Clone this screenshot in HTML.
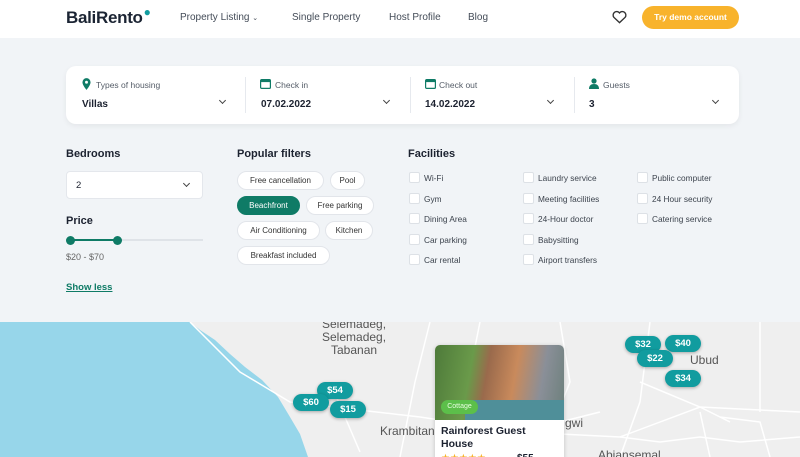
<!DOCTYPE html>
<html><head><meta charset="utf-8"><style>
*{box-sizing:border-box;margin:0;padding:0}
body{width:800px;height:457px;overflow:hidden;font-family:"Liberation Sans",sans-serif;color:#1c2230;background:#f1f4f7;position:relative}
.abs{position:absolute}
.nav{top:0;left:0;width:800px;height:38px;background:#fff}
.logo{left:66px;top:8px;font-size:17px;font-weight:bold;color:#1b2433;letter-spacing:-0.3px}
.navl{top:12px;font-size:10px;color:#444c58}
.btn{left:642px;top:6px;width:97px;height:23px;border-radius:12px;background:#f8b32c;color:#fff;font-size:8.5px;font-weight:bold;text-align:center;line-height:23px}
.search{left:66px;top:66px;width:673px;height:58px;background:#fff;border-radius:10px;box-shadow:0 2px 6px rgba(0,0,0,.06)}
.lab{font-size:8.5px;color:#555d68}
.val{font-size:10px;font-weight:bold;color:#1c2230}
.sep{width:1px;height:36px;background:#e6e9ee;top:11px}
.chev{width:5px;height:5px;border-right:1.3px solid #444;border-bottom:1.3px solid #444;transform:rotate(45deg)}
h3{position:absolute;font-size:11px;font-weight:bold;color:#1c2230}
.sel{left:66px;top:171px;width:137px;height:28px;background:#fff;border:1px solid #e4e7ec;border-radius:4px}
.chip{position:absolute;height:19px;border-radius:10px;background:#fff;border:1px solid #e2e5ea;font-size:8px;color:#333;line-height:17px;text-align:center}
.cb{position:absolute;width:11px;height:11px;background:#fff;border:1px solid #dde1e6;border-radius:2px}
.ft{position:absolute;font-size:8.3px;color:#3c434d}
.map{left:0;top:322px;width:800px;height:135px;background:#efefef;overflow:hidden}
.pin{position:absolute;height:17px;border-radius:9px;background:#119c9f;color:#fff;font-size:9.5px;font-weight:bold;text-align:center;line-height:17px;width:36px;box-shadow:0 1px 3px rgba(0,0,0,.3)}
.mt{position:absolute;font-size:12px;color:#555}
</style></head><body>
<div class="abs nav"></div>
<div class="abs logo">BaliRento<span style="color:#119c9f;font-size:12px;position:relative;top:-7px;left:1px">●</span></div>
<div class="abs navl" style="left:180px;top:12px">Property Listing <span style="font-size:7px">⌄</span></div>
<div class="abs navl" style="left:292px">Single Property</div>
<div class="abs navl" style="left:389px">Host Profile</div>
<div class="abs navl" style="left:468px">Blog</div>
<svg class="abs" style="left:612px;top:10px" width="15" height="14" viewBox="0 0 24 22"><path d="M12 20 3 11.5A5 5 0 0 1 12 4.5 5 5 0 0 1 21 11.5Z" fill="none" stroke="#333" stroke-width="2.2"/></svg>
<div class="abs btn">Try demo account</div>

<div class="abs search">
 <svg class="abs" style="left:16px;top:12px" width="9" height="12" viewBox="0 0 10 13"><path d="M5 0a4.5 4.5 0 0 0-4.5 4.5C.5 8 5 13 5 13s4.5-5 4.5-8.5A4.5 4.5 0 0 0 5 0z" fill="#0f7b66"/><circle cx="5" cy="4.5" r="1.6" fill="#fff"/></svg>
 <div class="abs lab" style="left:30px;top:14px">Types of housing</div>
 <div class="abs val" style="left:16px;top:33px">Villas</div>
 <div class="abs chev" style="left:154px;top:32px"></div>
 <div class="abs sep" style="left:179px"></div>
 <svg class="abs" style="left:194px;top:12px" width="11" height="11" viewBox="0 0 11 11"><rect x=".6" y="1.6" width="9.8" height="8.8" rx="1" fill="none" stroke="#0f7b66" stroke-width="1.2"/><rect x=".6" y="1.6" width="9.8" height="2.5" fill="#0f7b66"/></svg>
 <div class="abs lab" style="left:209px;top:14px">Check in</div>
 <div class="abs val" style="left:195px;top:33px">07.02.2022</div>
 <div class="abs chev" style="left:318px;top:32px"></div>
 <div class="abs sep" style="left:344px"></div>
 <svg class="abs" style="left:359px;top:12px" width="11" height="11" viewBox="0 0 11 11"><rect x=".6" y="1.6" width="9.8" height="8.8" rx="1" fill="none" stroke="#0f7b66" stroke-width="1.2"/><rect x=".6" y="1.6" width="9.8" height="2.5" fill="#0f7b66"/></svg>
 <div class="abs lab" style="left:373px;top:14px">Check out</div>
 <div class="abs val" style="left:359px;top:33px">14.02.2022</div>
 <div class="abs chev" style="left:482px;top:32px"></div>
 <div class="abs sep" style="left:508px"></div>
 <svg class="abs" style="left:523px;top:12px" width="10" height="11" viewBox="0 0 10 11"><circle cx="5" cy="3" r="2.6" fill="#0f7b66"/><path d="M0 11c0-3.5 2-5 5-5s5 1.5 5 5z" fill="#0f7b66"/></svg>
 <div class="abs lab" style="left:537px;top:14px">Guests</div>
 <div class="abs val" style="left:523px;top:33px">3</div>
 <div class="abs chev" style="left:647px;top:32px"></div>
</div>

<h3 style="left:66px;top:148px">Bedrooms</h3>
<div class="abs sel"><div class="abs" style="left:9px;top:8px;font-size:9.5px">2</div><div class="abs chev" style="left:117px;top:9px"></div></div>
<h3 style="left:66px;top:215px">Price</h3>
<div class="abs" style="left:70px;top:239px;width:133px;height:2px;background:#dfe3e8"></div>
<div class="abs" style="left:70px;top:239px;width:48px;height:2px;background:#0f7b66"></div>
<div class="abs" style="left:66px;top:236px;width:9px;height:9px;border-radius:50%;background:#0f7b66"></div>
<div class="abs" style="left:113px;top:236px;width:9px;height:9px;border-radius:50%;background:#0f7b66"></div>
<div class="abs" style="left:66px;top:252px;font-size:9px;color:#666">$20 - $70</div>
<div class="abs" style="left:66px;top:282px;font-size:9.5px;font-weight:bold;color:#0f7b66;text-decoration:underline">Show less</div>

<h3 style="left:237px;top:148px">Popular filters</h3>
<div class="chip" style="left:237px;top:171px;width:87px">Free cancellation</div>
<div class="chip" style="left:330px;top:171px;width:35px">Pool</div>
<div class="chip" style="left:237px;top:196px;width:63px;background:#0f7b66;border-color:#0f7b66;color:#fff">Beachfront</div>
<div class="chip" style="left:306px;top:196px;width:68px">Free parking</div>
<div class="chip" style="left:237px;top:221px;width:83px">Air Conditioning</div>
<div class="chip" style="left:325px;top:221px;width:48px">Kitchen</div>
<div class="chip" style="left:237px;top:246px;width:93px">Breakfast included</div>

<h3 style="left:408px;top:148px">Facilities</h3>
<div class="cb" style="left:409px;top:172px"></div><div class="ft" style="left:424px;top:173px">Wi-Fi</div>
<div class="cb" style="left:409px;top:193px"></div><div class="ft" style="left:424px;top:194px">Gym</div>
<div class="cb" style="left:409px;top:213px"></div><div class="ft" style="left:424px;top:214px">Dining Area</div>
<div class="cb" style="left:409px;top:234px"></div><div class="ft" style="left:424px;top:235px">Car parking</div>
<div class="cb" style="left:409px;top:254px"></div><div class="ft" style="left:424px;top:255px">Car rental</div>
<div class="cb" style="left:523px;top:172px"></div><div class="ft" style="left:538px;top:173px">Laundry service</div>
<div class="cb" style="left:523px;top:193px"></div><div class="ft" style="left:538px;top:194px">Meeting facilities</div>
<div class="cb" style="left:523px;top:213px"></div><div class="ft" style="left:538px;top:214px">24-Hour doctor</div>
<div class="cb" style="left:523px;top:234px"></div><div class="ft" style="left:538px;top:235px">Babysitting</div>
<div class="cb" style="left:523px;top:254px"></div><div class="ft" style="left:538px;top:255px">Airport transfers</div>
<div class="cb" style="left:637px;top:172px"></div><div class="ft" style="left:652px;top:173px">Public computer</div>
<div class="cb" style="left:637px;top:193px"></div><div class="ft" style="left:652px;top:194px">24 Hour security</div>
<div class="cb" style="left:637px;top:213px"></div><div class="ft" style="left:652px;top:214px">Catering service</div>

<div class="abs map">
 <svg class="abs" style="left:0;top:0" width="800" height="135">
  <path d="M0 0H190L200 8 215 18 230 32 245 45 262 58 278 75 290 95 300 112 308 135H0Z" fill="#97d6ea"/>
  <g stroke="#fff" stroke-width="1.5" fill="none">
   <path d="M190 0 240 50 290 80 420 95 520 110 620 115 700 85 800 90"/>
   <path d="M560 0 570 60 540 135"/><path d="M650 0 640 80 620 135"/><path d="M700 90 710 135"/>
   <path d="M600 90 560 100 540 135"/><path d="M720 95 760 100 770 135"/><path d="M640 60 700 85 730 100"/>
   <path d="M430 0 415 60 400 135"/><path d="M330 60 360 130"/><path d="M760 0 760 90"/><path d="M480 0 470 50"/>
   <path d="M620 115 660 120 700 115 740 120 800 115"/>
  </g>
 </svg>
 <div class="mt" style="left:322px;top:-4px;text-align:center;line-height:13px">Selemadeg,<br>Selemadeg,<br>Tabanan</div>
 <div class="mt" style="left:380px;top:102px">Krambitan</div>
 <div class="mt" style="left:565px;top:94px">gwi</div>
 <div class="mt" style="left:690px;top:31px">Ubud</div>
 <div class="mt" style="left:598px;top:126px">Abiansemal</div>
 <div class="pin" style="left:625px;top:14px">$32</div>
 <div class="pin" style="left:665px;top:13px">$40</div>
 <div class="pin" style="left:637px;top:28px">$22</div>
 <div class="pin" style="left:665px;top:48px">$34</div>
 <div class="pin" style="left:317px;top:60px">$54</div>
 <div class="pin" style="left:293px;top:72px">$60</div>
 <div class="pin" style="left:330px;top:79px">$15</div>
 <div class="abs" style="left:435px;top:23px;width:129px;height:120px;background:#fff;border-radius:5px;overflow:hidden;box-shadow:0 1px 4px rgba(0,0,0,.2)">
  <div class="abs" style="left:0;top:0;width:129px;height:75px;background:linear-gradient(100deg,#4e7a3a 0,#6a9a4a 28%,#9a6a4c 40%,#c98a5c 60%,#8a8f98 80%,#6b7f7a 100%)"></div>
  <div class="abs" style="left:30px;top:55px;width:99px;height:20px;background:#4f8f99"></div>
  <div class="abs" style="left:6px;top:55px;width:37px;height:14px;border-radius:7px;background:#5cbf4a;color:#e8ffe0;font-size:7px;line-height:14px;text-align:center">Cottage</div>
  <div class="abs" style="left:6px;top:80px;font-size:10.5px;font-weight:bold;line-height:13px">Rainforest Guest<br>House</div>
  <div class="abs" style="left:6px;top:108px;color:#f8b32c;font-size:10px">★★★★★</div>
  <div class="abs" style="left:82px;top:108px;font-size:10px;font-weight:bold">$55</div>
 </div>
</div>
</body></html>
